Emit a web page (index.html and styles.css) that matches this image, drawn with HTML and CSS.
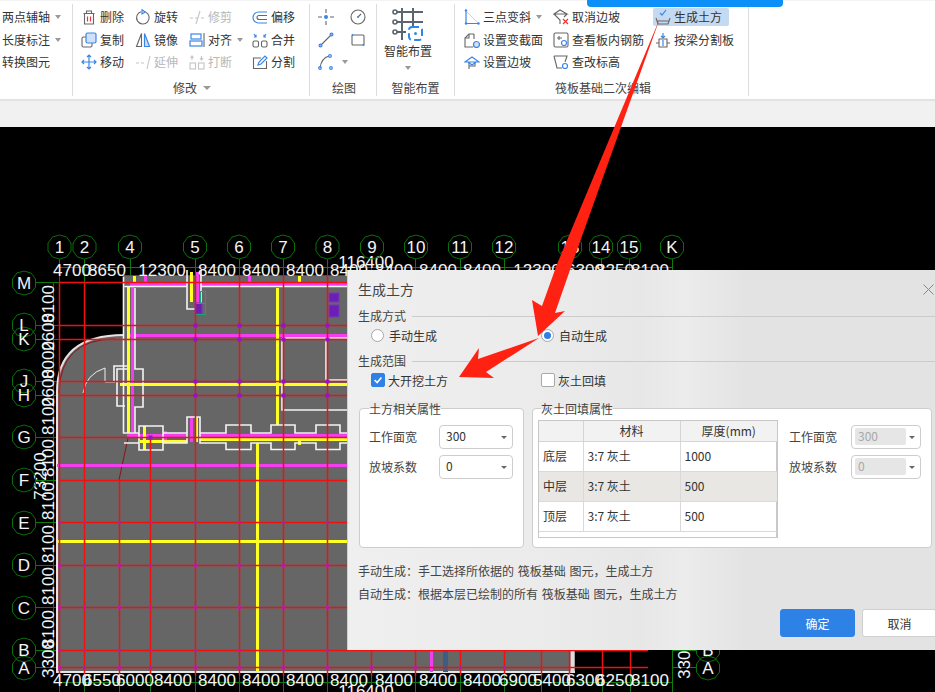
FILE: index.html
```html
<!DOCTYPE html>
<html lang="zh">
<head>
<meta charset="utf-8">
<title>生成土方</title>
<link rel="stylesheet" href="styles.css">
</head>
<body>
<div class="app">
  <header class="ribbon">
    <section class="group g1">
      <div class="tool-list">
        <div class="tool">两点辅轴<i class="caret"></i></div>
        <div class="tool">长度标注<i class="caret"></i></div>
        <div class="tool">转换图元</div>
      </div>
    </section>
    <section class="group g2">
      <div class="grid-tools">
        <div class="tool"><svg class="ico" viewBox="0 0 16 16"><path class="g" d="M2.500 4.500h11M5.500 4.500V2h5v2.500M3.500 4.500v10.500h9V4.500"/><path class="r" d="M6.500 7.500v5M9.500 7.500v5"/></svg>删除</div>
        <div class="tool"><svg class="ico" viewBox="0 0 16 16"><path class="g" d="M6 2.700A6.300 6.300 0 1 0 10.500 3"/><path class="b" d="M7 .8l3.200 2.200-3.200 2z"/></svg>旋转</div>
        <div class="tool off"><svg class="ico" viewBox="0 0 16 16"><path class="l" d="M1 9h3M6 9h3M12 9h3M11 2 7 15"/></svg>修剪</div>
        <div class="tool"><svg class="ico" viewBox="0 0 16 16"><path class="b" d="M15 3H6.500a5.500 5.500 0 0 0 0 11H15"/><path class="g" d="M15 6.500H7a2 2 0 0 0 0 4h8"/></svg>偏移</div>
        <div class="tool"><svg class="ico" viewBox="0 0 16 16"><rect class="g" x="1" y="5" width="10" height="10" rx="1.500"/><rect class="bf" x="5" y="1" width="10" height="10" rx="1.500"/></svg>复制</div>
        <div class="tool"><svg class="ico" viewBox="0 0 16 16"><path class="g" d="M6.500 1.500 1.500 14.500h5z"/><path class="bf" d="M9.500 1.500l5 13h-5z"/></svg>镜像</div>
        <div class="tool"><svg class="ico" viewBox="0 0 16 16"><rect class="b" x="2" y="2" width="10" height="5"/><rect class="b" x="1" y="9" width="12" height="5"/><path class="g" d="M15 1v14"/></svg>对齐<i class="caret"></i></div>
        <div class="tool"><svg class="ico" viewBox="0 0 16 16"><rect class="g" x="1" y="9" width="5.500" height="6" rx="1.500"/><rect class="g" x="9.500" y="9" width="5.500" height="6" rx="1.500"/><path class="b" d="M2 2l2 3M4 2.800V5H2M14 2l-2 3M12 2.800V5h2"/></svg>合并</div>
        <div class="tool"><svg class="ico" viewBox="0 0 16 16"><path class="b" d="M8 1v14M1 8h14M6 3l2-2 2 2M6 13l2 2 2-2M3 6 1 8l2 2M13 6l2 2-2 2"/></svg>移动</div>
        <div class="tool off"><svg class="ico" viewBox="0 0 16 16"><path class="l" d="M1 9h3M6 9h3M15 2l-3 13"/></svg>延伸</div>
        <div class="tool off"><svg class="ico" viewBox="0 0 16 16"><rect class="l" x="1" y="9" width="5.500" height="6"/><rect class="l" x="9.500" y="9" width="5.500" height="6"/><path class="l" d="M3 2v4M1.500 4 3 2l1.500 2M12.500 2v4M11 4l1.500 2L14 4"/></svg>打断</div>
        <div class="tool"><svg class="ico" viewBox="0 0 16 16"><path class="g" d="M9 4H1.500v10.500h13V7"/><path class="b" d="M6 11l1-3 6-6 2 2-6 6z"/></svg>分割</div>
      </div>
      <div class="group-label">修改<i class="caret big"></i></div>
    </section>
    <section class="group g3">
      <div class="draw-tools">
        <div class="tool"><svg class="ico" viewBox="0 0 16 16"><path class="g" d="M8 0v4M8 12v4M0 8h4M12 8h4"/><circle class="bd" cx="8" cy="8" r="2"/></svg></div>
        <div class="tool"><svg class="ico" viewBox="0 0 16 16"><circle class="g" cx="8" cy="8" r="7"/><path class="g" d="M8 8l3-3"/><circle class="bd" cx="8" cy="8" r="1"/></svg></div>
        <div class="tool"><svg class="ico" viewBox="0 0 16 16"><path class="g" d="M2.500 13.500 13.500 2.500"/><circle class="b" cx="2.500" cy="13.500" r="1.400"/><circle class="b" cx="13.500" cy="2.500" r="1.400"/></svg></div>
        <div class="tool"><svg class="ico" viewBox="0 0 16 16"><rect class="g" x="2" y="3" width="12" height="10" rx="1"/><circle class="bd" cx="2.500" cy="3" r="1"/><circle class="bd" cx="13.500" cy="13" r="1"/></svg></div>
        <div class="tool wide"><svg class="ico" viewBox="0 0 16 16"><path class="g" d="M2 14C3 7 7 3 11 2"/><circle class="b" cx="2" cy="14" r="1.300"/><circle class="b" cx="12" cy="2" r="1.300"/><circle class="b" cx="13" cy="14" r="1.300"/></svg><i class="caret"></i></div>
      </div>
      <div class="group-label">绘图</div>
    </section>
    <section class="group g4">
      <div class="big-tool">
        <svg class="big-ico" viewBox="0 0 32 34"><path class="gb" d="M5 5H31M5 15H31M5 25H14M10 1V33M21 1V19"/><circle class="gc" cx="3" cy="5" r="2"/><circle class="gc" cx="3" cy="15" r="2"/><circle class="gc" cx="3" cy="25" r="2"/><rect class="bd-c" x="17" y="20" width="13" height="13" rx="3"/><circle class="bd" cx="23.500" cy="26.500" r="1.500"/></svg>
        <span>智能布置</span>
        <i class="caret"></i>
      </div>
      <div class="group-label">智能布置</div>
    </section>
    <section class="group g5">
      <div class="edit-tools">
        <div class="tool"><svg class="ico" viewBox="0 0 16 16"><path class="b" d="M2 1v13.500h13"/><path class="bthin" d="M2 2 14 14"/><circle class="bd" cx="2" cy="1.500" r="1.200"/><circle class="bd" cx="2" cy="14.500" r="1.200"/><circle class="bd" cx="14.500" cy="14.500" r="1.200"/></svg>三点变斜<i class="caret"></i></div>
        <div class="tool"><svg class="ico" viewBox="0 0 16 16"><path class="g" d="M1 5h13L7 1zM1 5l6 6v4M14 5l-3 3"/><path class="r" d="M10 10l5 5M15 10l-5 5"/></svg>取消边坡</div>
        <div class="tool active"><svg class="ico" viewBox="0 0 16 16"><path class="g" d="M1 9l2 6h10l2-6M2 12h12"/><path class="b" d="M5 4l2 2 4-5"/></svg>生成土方</div>
        <div class="tool"><svg class="ico" viewBox="0 0 16 16"><path class="g" d="M10 2H5L1 6v9h8"/><path class="g" d="M5 2v4H1M10 2v5"/><circle class="bf" cx="12.500" cy="12.500" r="3"/></svg>设置变截面</div>
        <div class="tool"><svg class="ico" viewBox="0 0 16 16"><rect class="g" x="1" y="1" width="14" height="14" rx="1.500"/><path class="g" d="M4 6h5M6 4v4"/><circle class="b" cx="11" cy="11" r="2.500"/></svg>查看板内钢筋</div>
        <div class="tool"><svg class="ico" viewBox="0 0 16 16"><path class="b" d="M8 1v5M6 4l2 2 2-2"/><path class="g" d="M4 7h8v8H4zM1 11h3M12 11h3"/><path class="b" d="M8 8v6"/></svg>按梁分割板</div>
        <div class="tool"><svg class="ico" viewBox="0 0 16 16"><path class="b" d="M1 8l7-5 7 5zM4 8l4 3 4-3"/><path class="g" d="M5 9v6M5 12h6V9"/></svg>设置边坡</div>
        <div class="tool"><svg class="ico" viewBox="0 0 16 16"><path class="g" d="M1 2h13l-2 6M1 2l3 12h5"/><circle class="b" cx="12" cy="12" r="2.500"/></svg>查改标高</div>
      </div>
      <div class="group-label">筏板基础二次编辑</div>
    </section>
  </header>
  <div class="strip"></div>

  <svg class="canvas" viewBox="0 127 935 565" aria-label="CAD">
    <defs>
      <polygon id="bub" class="bubble" points="0,-12 7,-10 11.500,-4 11.500,4 7,10 0,12 -7,10 -11.500,4 -11.500,-4 -7,-10"/>
    </defs>
    <path class="dim-line" d="M59.500 259V282M84.500 259V282M130.500 259V276M195.500 259V276M239.500 259V276M283.500 259V276M327.500 259V276M371.500 259V276M415.500 259V276M460.500 259V276M504.500 259V276M570.500 259V276M601.500 259V276M629.500 259V276M672.500 259V276M36 282.500H59M36 325.500H59M36 339.500H59M36 381.500H59M36 395.500H59M36 437.500H59M36 480.500H59M36 522.500H59M36 565.500H59M36 607.500H59M36 650.500H59M36 667.500H59M53.500 283V668M59 267.500H672M123 275.500H672M59 682.500H672M59.500 672V692M84.500 672V692M119.500 672V692M150.500 672V692M195.500 672V692M239.500 672V692M283.500 672V692M327.500 672V692M371.500 672V692M415.500 672V692M460.500 672V692M504.500 672V692M541.500 672V692M569.500 672V692M602.500 672V692M630.500 672V692M672.500 650V692M672 650.500H697M672 667.500H697"/>

    <path class="slab" d="M124 276H575V672H57V392Q57 335 124 335Z"/>
    <path class="outer-arc" d="M124 335Q57 335 57 392V672H575"/>
    <path class="thin-red" d="M115 339Q60 339 59 393M128 438 119 480"/>

    <path class="magenta" d="M200 284.500H575M130 284.500H187M132.500 287V432M127 335.500H575M57 465.500H575M127 435.500H186M200 435.500H575M431.500 650V672"/>
    <path class="magenta-thin" d="M145.500 276V285M249.500 276V285M191.500 417V442M191.500 272V300M197.500 272V305M165.500 431V442"/>
    <path class="yellow" d="M128.500 287V433M277.500 288V425M120 384.500H575M257.500 443V672M57 541.500H575M140 441.500H187M200 439.500H575M144.500 426V450M196.500 417V442M191.500 272V302"/>
    <path class="yellow-thin" d="M134.500 276V282M299.500 276V282M299.500 439V445"/>

    <path class="white" d="M123.500 276.500V433H136M124.500 286.500H187M201 286.500H575M135 288V369H143V407H135V433H139V426H163V433H187M127 369H117V406H125M187 433V417H200V433H226V425H251V433H271V425H295V433H316V425H340V433H575M124 443H139V450H163V443H187V417M200 417V443H226V449.500H251V443H271V449.500H295V443H316V449.500H340V443H575M139 433V443M163 433V443M187 270V309H201V270M282 338V410H575M282 338H326V380H575M326 338H575M114 381V366H127"/>
    <path class="white-thin" d="M83 393Q86 374 105 368V382H115"/>
    <path class="white edge" d="M572.500 276V672"/>

    <path class="blue-grey" d="M445.500 650V672"/>
    <rect class="purple" x="195" y="303" width="7" height="11"/>
    <rect class="teal" x="200.500" y="291.500" width="5" height="12"/>
    <rect class="teal" x="195.500" y="303.500" width="10" height="11"/>
    <rect class="purple" x="329" y="293" width="10" height="9"/>
    <rect class="purple" x="329" y="305" width="10" height="12"/>

    <path class="red" d="M59 282.500H575M59 325.500H575M59 339.500H575M59 381.500H575M59 395.500H575M59 437.500H575M59 480.500H575M59 522.500H575M59 565.500H575M59 607.500H575M59 650.500H648M59 667.500H648M59.500 282V676M84.500 282V676M119.500 480V676M150.500 437V676M195.500 276V676M239.500 276V676M283.500 276V676M327.500 276V676M371.500 276V676M415.500 276V676M460.500 276V676M504.500 276V676M541.500 276V676M569.500 276V676M602.500 640V676M630.500 640V676"/>

    <path class="node" d="M193.500 323.500h4v4h-4zM237.500 323.500h4v4h-4zM281.500 323.500h4v4h-4zM325.500 323.500h4v4h-4zM193.500 337.500h4v4h-4zM237.500 337.500h4v4h-4zM281.500 337.500h4v4h-4zM325.500 337.500h4v4h-4zM193.500 379.500h4v4h-4zM237.500 379.500h4v4h-4zM281.500 379.500h4v4h-4zM325.500 379.500h4v4h-4zM193.500 393.500h4v4h-4zM237.500 393.500h4v4h-4zM281.500 393.500h4v4h-4zM325.500 393.500h4v4h-4zM148.500 435.500h4v4h-4z"/>
    <path class="node small" d="M58 521h3v3h-3zM83 521h3v3h-3zM118 521h3v3h-3zM149 521h3v3h-3zM194 521h3v3h-3zM238 521h3v3h-3zM282 521h3v3h-3zM326 521h3v3h-3zM58 564h3v3h-3zM83 564h3v3h-3zM118 564h3v3h-3zM149 564h3v3h-3zM194 564h3v3h-3zM238 564h3v3h-3zM282 564h3v3h-3zM326 564h3v3h-3zM58 606h3v3h-3zM83 606h3v3h-3zM118 606h3v3h-3zM149 606h3v3h-3zM194 606h3v3h-3zM238 606h3v3h-3zM282 606h3v3h-3zM326 606h3v3h-3zM58 649h3v3h-3zM83 649h3v3h-3zM118 649h3v3h-3zM149 649h3v3h-3zM194 649h3v3h-3zM238 649h3v3h-3zM282 649h3v3h-3zM326 649h3v3h-3zM58 666h3v3h-3zM83 666h3v3h-3zM118 666h3v3h-3zM149 666h3v3h-3zM194 666h3v3h-3zM238 666h3v3h-3zM282 666h3v3h-3zM326 666h3v3h-3zM370 666h3v3h-3zM414 666h3v3h-3zM459 666h3v3h-3zM503 666h3v3h-3z"/>

    <g class="dim">
      <text x="72" y="276">4700</text><text x="107" y="276">8650</text><text x="162" y="276">12300</text>
      <text x="217" y="276">8400</text><text x="261" y="276">8400</text><text x="305" y="276">8400</text><text x="349" y="276">8400</text><text x="394" y="276">8400</text><text x="438" y="276">8400</text><text x="482" y="276">8400</text><text x="537" y="276">12300</text><text x="585" y="276">6300</text><text x="615" y="276">8250</text><text x="650" y="276">8100</text>
      <text x="366" y="268">116400</text>
      <text x="72" y="686">4700</text><text x="102" y="686">6550</text><text x="135" y="686">6000</text><text x="173" y="686">8400</text><text x="217" y="686">8400</text><text x="261" y="686">8400</text><text x="305" y="686">8400</text><text x="349" y="686">8400</text><text x="394" y="686">8400</text><text x="438" y="686">8400</text><text x="482" y="686">8400</text><text x="518" y="686">6900</text><text x="552" y="686">5400</text><text x="585" y="686">6300</text><text x="615" y="686">6250</text><text x="650" y="686">8100</text>
      <text x="366" y="697">116400</text>
      <text transform="rotate(-90 54 304)" x="54" y="304">8100</text>
      <text transform="rotate(-90 54 332)" x="54" y="332">2600</text>
      <text transform="rotate(-90 54 360)" x="54" y="360">8000</text>
      <text transform="rotate(-90 54 388)" x="54" y="388">2600</text>
      <text transform="rotate(-90 54 416)" x="54" y="416">8100</text>
      <text transform="rotate(-90 54 458)" x="54" y="458">8100</text>
      <text transform="rotate(-90 54 501)" x="54" y="501">8100</text>
      <text transform="rotate(-90 54 544)" x="54" y="544">8100</text>
      <text transform="rotate(-90 54 586)" x="54" y="586">8100</text>
      <text transform="rotate(-90 54 629)" x="54" y="629">8100</text>
      <text transform="rotate(-90 54 659)" x="54" y="659">3300</text>
      <text transform="rotate(-90 46 476)" x="46" y="476">73200</text>
      <text transform="rotate(-90 690 660)" x="690" y="660">3300</text>
    </g>

    <use href="#bub" x="59.500" y="247"/><use href="#bub" x="84.500" y="247"/><use href="#bub" x="130" y="247"/><use href="#bub" x="195" y="247"/><use href="#bub" x="239" y="247"/><use href="#bub" x="283" y="247"/><use href="#bub" x="327.500" y="247"/><use href="#bub" x="372" y="247"/><use href="#bub" x="416" y="247"/><use href="#bub" x="460" y="247"/><use href="#bub" x="504" y="247"/><use href="#bub" x="570" y="247"/><use href="#bub" x="601" y="247"/><use href="#bub" x="629" y="247"/><use href="#bub" x="672" y="247"/>
    <use href="#bub" x="24" y="283"/><use href="#bub" x="24" y="325"/><use href="#bub" x="24" y="339"/><use href="#bub" x="24" y="381"/><use href="#bub" x="24" y="395"/><use href="#bub" x="24" y="437"/><use href="#bub" x="24" y="480"/><use href="#bub" x="24" y="523"/><use href="#bub" x="24" y="565"/><use href="#bub" x="24" y="608"/><use href="#bub" x="24" y="650"/><use href="#bub" x="24" y="668"/>
    <use href="#bub" x="708" y="650"/><use href="#bub" x="708" y="668"/>
    <g class="dim">
      <text x="59.500" y="253">1</text><text x="84.500" y="253">2</text><text x="130" y="253">4</text><text x="195" y="253">5</text><text x="239" y="253">6</text><text x="283" y="253">7</text><text x="327.500" y="253">8</text><text x="372" y="253">9</text><text x="416" y="253">10</text><text x="460" y="253">11</text><text x="504" y="253">12</text><text x="570" y="253">13</text><text x="601" y="253">14</text><text x="629" y="253">15</text><text x="672" y="253">K</text>
      <text x="24" y="289">M</text><text x="24" y="331">L</text><text x="24" y="345">K</text><text x="24" y="387">J</text><text x="24" y="401">H</text><text x="24" y="443">G</text><text x="24" y="486">F</text><text x="24" y="529">E</text><text x="24" y="571">D</text><text x="24" y="614">C</text><text x="24" y="656">B</text><text x="24" y="674">A</text>
      <text x="708" y="656">B</text><text x="708" y="674">A</text>
    </g>
  </svg>

  <div class="dialog">
    <div class="dlg-title">生成土方<svg class="close" viewBox="0 0 11 11"><path d="M.5.500l10 10M10.500.500l-10 10"/></svg></div>
    <div class="sec-head">生成方式</div>
    <div class="choice-row">
      <label class="choice"><span class="radio"></span>手动生成</label>
      <label class="choice"><span class="radio on"></span>自动生成</label>
    </div>
    <div class="sec-head second">生成范围</div>
    <div class="choice-row">
      <label class="choice"><span class="check on"><svg viewBox="0 0 14 14"><path d="M3 7l3 3 5-6"/></svg></span>大开挖土方</label>
      <label class="choice"><span class="check"></span>灰土回填</label>
    </div>
    <div class="panels">
      <div class="panel left">
        <div class="panel-title">土方相关属性</div>
        <div class="field"><span class="field-label">工作面宽</span><div class="select">300<i class="caret dark"></i></div></div>
        <div class="field"><span class="field-label">放坡系数</span><div class="select">0<i class="caret dark"></i></div></div>
      </div>
      <div class="panel right">
        <div class="panel-title">灰土回填属性</div>
        <div class="panel-body">
          <div class="grid-wrap">
            <table class="mat">
              <thead><tr><th class="c1"></th><th class="c2">材料</th><th class="c3">厚度(mm)</th></tr></thead>
              <tbody>
                <tr><td>底层</td><td>3:7 灰土</td><td>1000</td></tr>
                <tr class="sel"><td>中层</td><td>3:7 灰土</td><td>500</td></tr>
                <tr><td>顶层</td><td>3:7 灰土</td><td>500</td></tr>
              </tbody>
            </table>
          </div>
          <div class="side">
            <div class="field"><span class="field-label narrow">工作面宽</span><div class="select off"><span class="inner">300</span><i class="caret dark"></i></div></div>
            <div class="field"><span class="field-label narrow">放坡系数</span><div class="select off"><span class="inner">0</span><i class="caret dark"></i></div></div>
          </div>
        </div>
      </div>
    </div>
    <p class="hint first">手动生成：手工选择所依据的 筏板基础 图元，生成土方</p>
    <p class="hint">自动生成：根据本层已绘制的所有 筏板基础 图元，生成土方</p>
    <div class="actions">
      <button class="btn primary">确定</button>
      <button class="btn">取消</button>
    </div>
  </div>

  <div class="top-bar"></div>
  <svg class="arrows" viewBox="0 0 935 692"><path class="arrow" d="M660 18 571.700 265 555 313 565 311 538 336 532 300 542 306 556.700 265Z"/><path class="arrow" d="M539 338 478 359 479 348 459 377 494 378 486 372Z"/></svg>
</div>
</body>
</html>
```
FILE: styles.css
```css
* { box-sizing: border-box; }
html, body { margin: 0; padding: 0; }
body { font-family: "Noto Sans CJK SC", "Noto Sans", sans-serif; font-size: 12px; color: #333; overflow: hidden; background: #000; }
.app { position: relative; width: 935px; height: 692px; overflow: hidden; }

.ribbon { display: flex; height: 101px; background: #fff; border-top: 1px solid #f4f4f4; border-bottom: 2px solid #e2e2e2; padding-top: 3px; }
.group { height: 92px; border-right: 1px solid #dcdcdc; display: flex; flex-direction: column; flex: none; }
.g1 { width: 73px; padding: 2px 0 0 2px; }
.g2 { width: 237px; padding: 2px 0 0 8px; }
.g3 { width: 67px; padding: 2px 0 0 8px; }
.g4 { width: 78px; align-items: center; }
.g5 { width: 294px; padding: 2px 0 0 9px; }

.tool { display: flex; align-items: center; height: 22.500px; white-space: nowrap; line-height: 18px; }
.tool.off { color: #b8b8b8; }
.ico { width: 16px; height: 16px; margin-right: 3px; flex: none; fill: none; }
.grid-tools { display: grid; grid-template-columns: 54px 54px 63px 1fr; }
.draw-tools { display: grid; grid-template-columns: 32px 32px; }
.edit-tools { display: grid; grid-template-columns: 89px 102px 1fr; }
.tool.active { background: #c4daf2; border-radius: 2px; height: 18px; margin: 2px 19px 2px -2px; padding-left: 2px; }
.caret { display: inline-block; width: 0; height: 0; border: 3.500px solid transparent; border-top: 4px solid #999; border-bottom: 0; margin-left: 5px; }
.caret.big { border-width: 4px 4.500px 0; margin-left: 6px; }
.caret.dark { border-width: 3px 3px 0; border-top-color: #666; margin-left: 0; position: absolute; right: 5px; top: 10px; }

.group-label { margin-top: auto; height: 17px; line-height: 17px; text-align: center; color: #444; white-space: nowrap; display: flex; align-items: center; justify-content: center; }
.g2 .group-label, .g3 .group-label, .g5 .group-label { margin-left: -6px; }
.big-tool { display: flex; flex-direction: column; align-items: center; padding-top: 3px; align-self: flex-start; margin-left: 7px; }
.big-ico { width: 32px; height: 34px; fill: none; }
.big-tool span { line-height: 16px; margin-top: 2px; }
.big-tool .caret { margin: 7px 0 0; }

/* icon strokes */
.g { stroke: #666; stroke-width: 1.100; fill: none; }
.b { stroke: #3a86e6; stroke-width: 1.200; fill: none; }
.bthin { stroke: #bcd6f5; stroke-width: 1; fill: none; }
.r { stroke: #e33; stroke-width: 1.200; fill: none; }
.l { stroke: #c4c4c4; stroke-width: 1.100; fill: none; }
.bf { stroke: #3a86e6; stroke-width: 1.200; fill: #cfe0f8; }
.bd { fill: #3a86e6; stroke: none; }
.gb { stroke: #5c6470; stroke-width: 2; fill: none; }
.gc { stroke: #5c6470; stroke-width: 1.600; fill: #fff; }
.bd-c { stroke: #2f86ea; stroke-width: 2; stroke-dasharray: 7 3.500; fill: #fff; }

.strip { height: 26px; background: #f1f1f1; }
.canvas { display: block; width: 935px; height: 565px; background: #000; }

.dim-line { stroke: #0c7a0c; stroke-width: 1; fill: none; }
.bubble { fill: none; stroke: #0a6e0a; stroke-width: 1; }
.slab { fill: #666; }
.outer-arc { fill: none; stroke: #e4e4e4; stroke-width: 2; }
.thin-red { fill: none; stroke: #8a1414; stroke-width: 1; }
.magenta { fill: none; stroke: #f53df0; stroke-width: 3; }
.magenta-thin { fill: none; stroke: #f53df0; stroke-width: 3; }
.yellow { fill: none; stroke: #ffff24; stroke-width: 3; }
.yellow-thin { fill: none; stroke: #ffff24; stroke-width: 3; }
.white { fill: none; stroke: #f4f4f4; stroke-width: 1.600; }
.white.edge { stroke-width: 4; stroke: #ddd; }
.white-thin { fill: none; stroke: #eee; stroke-width: 1; }
.blue-grey { fill: none; stroke: #3f5d80; stroke-width: 5; }
.purple { fill: #6a20b4; stroke: #7a35c0; stroke-width: 1; }
.teal { fill: none; stroke: #10a878; stroke-width: 1; }
.red { fill: none; stroke: #f01010; stroke-width: 1.500; }
.node { fill: #9a10c4; }
.node.small { fill: #c0189a; }
.dim text { font-family: "Liberation Sans", Arial, sans-serif; font-size: 17px; fill: #f4f4f4; text-anchor: middle; }

.dialog { position: absolute; left: 347px; top: 270px; width: 590px; height: 380px; padding-left: 10px;
  background: linear-gradient(90deg, #efefef 0%, #ebebeb 35%, #e7e7e7 50%, #ececec 57%, #e3e3e3 68%, #e3e3e3 100%);
  border-left: 1px solid #cfcfcf; color: #444; }
.dlg-title { position: relative; height: 38px; line-height: 38px; font-size: 14px; }
.close { position: absolute; left: 565px; top: 14px; width: 11px; height: 11px; fill: none; stroke: #888; stroke-width: 1; }
.sec-head { display: flex; align-items: center; gap: 6px; height: 16px; line-height: 16px; }
.sec-head::after { content: ""; flex: 1; height: 1px; background: #cbcbcb; }
.sec-head.second { margin-top: 7px; }
.choice-row { display: grid; grid-template-columns: 170px 1fr; height: 22px; padding-left: 13px; }
.choice { display: flex; align-items: center; color: #333; }
.radio { width: 13px; height: 13px; border-radius: 50%; border: 1px solid #a8a8a8; background: #fff; margin-right: 5px; display: flex; align-items: center; justify-content: center; }
.radio.on::after { content: ""; width: 7px; height: 7px; border-radius: 50%; background: #2f80e7; }
.check { width: 14px; height: 14px; border-radius: 2px; border: 1px solid #a8a8a8; background: #fff; margin-right: 3px; display: block; }
.check.on { background: #2f80e7; border-color: #2f80e7; }
.check svg { display: block; width: 12px; height: 12px; fill: none; stroke: #fff; stroke-width: 1.800; }
.panels { display: flex; gap: 8px; margin: 17px 0 0 1px; }
.panel { height: 140px; background: #fff; border: 1px solid #cdcdcd; border-radius: 4px; }
.panel.left { width: 165px; padding: 0 10px 0 9px; }
.panel.right { width: 400px; padding: 0 5px; }
.panel-title { width: max-content; margin: -8px 0 0 3px; height: 16px; line-height: 16px; color: #444; background: linear-gradient(#eaeaea 50%, #fff 50%); }
.panel.left .panel-title { margin-left: 0; }
.field { display: flex; align-items: center; height: 24px; margin-top: 6px; }
.panel.left .field:nth-of-type(2) { margin-top: 8px; }
.field-label { width: 70px; flex: none; padding-bottom: 2px; }
.field-label.narrow { width: 62px; }
.select { position: relative; width: 74px; height: 24px; line-height: 20px; border: 1px solid #cdcdcd; border-radius: 4px; padding-left: 6px; background: #fff; color: #333; }
.side .select { width: 70px; }
.select.off { padding: 2px 3px; color: #a8a8a8; }
.select.off .caret { top: 10px; }
.inner { display: block; width: 51px; height: 17px; line-height: 16px; background: #e6e6e6; border-radius: 2px; padding-left: 3px; }
.panel-body { display: flex; margin-top: 3px; }
.grid-wrap { width: 240px; height: 118px; border: 1px solid #c8c8c8; border-right-width: 2px; flex: none; background: #fff; }
.mat { border-collapse: collapse; table-layout: fixed; width: 238px; color: #333; }
.mat th { height: 20px; background: #f2f2f2; font-weight: 400; border-right: 1px solid #d4d4d4; border-bottom: 1px solid #d4d4d4; padding: 0; }
.mat td { height: 30px; border-right: 1px solid #d9d9d9; border-bottom: 1px solid #d9d9d9; padding: 0 0 2px 4px; }
.mat tr td:nth-child(3), .mat tr th:nth-child(3) { border-right: 0; }
.mat .c1 { width: 44px; }
.mat .c2 { width: 97px; }
.mat .sel td { background: #e8e7e4; }
.side { margin-left: 11px; }
.side .field:first-child { margin-top: 5px; }
.hint { margin: 0; height: 23px; line-height: 23px; color: #444; white-space: nowrap; word-spacing: 1px; }
.hint.first { margin-top: 11px; }
.actions { display: flex; gap: 7px; margin: 4px 0 0 422px; }
.btn { width: 75px; height: 28px; padding: 0; font: inherit; border: 1px solid #d0d0d0; border-radius: 3px; background: #fff; color: #333; }
.btn.primary { background: #2e82e6; border-color: #2e82e6; color: #fff; }

.top-bar { position: absolute; left: 587px; top: 0; width: 196px; height: 7px; background: #0a90f8; border-radius: 0 0 4px 4px; }
.arrows { position: absolute; left: 0; top: 0; width: 935px; height: 692px; pointer-events: none; }
.arrow { fill: #ff2112; }
```
